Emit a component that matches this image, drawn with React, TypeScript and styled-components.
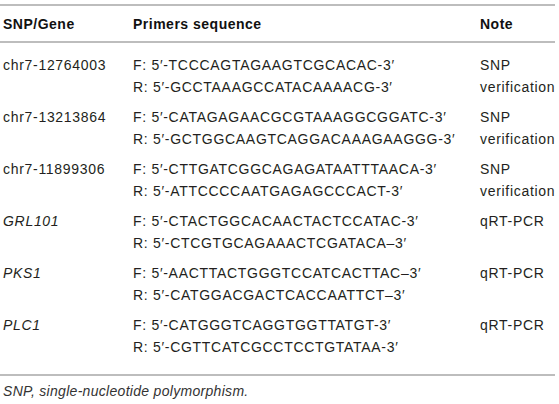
import React from "react";
import styled, { createGlobalStyle } from "styled-components";

const GlobalStyle = createGlobalStyle`
  html, body {
    margin: 0;
    padding: 0;
    background: #ffffff;
  }
  body {
    font-family: "Liberation Sans", Arial, Helvetica, sans-serif;
    color: #231f20;
  }
`;

const Page = styled.div`
  width: 559px;
  height: 404px;
  padding-top: 4px;
  box-sizing: border-box;
  overflow: hidden;
`;

const Table = styled.table`
  width: 555px;
  border-collapse: collapse;
  table-layout: fixed;
  font-size: 14px;
  letter-spacing: 0.7px;
`;

const HeadRow = styled.tr`
  border-top: 2px solid #bdbdbd;
  border-bottom: 2px solid #bdbdbd;
`;

const HeadCell = styled.th<{ $w: number; $first?: boolean }>`
  width: ${(p) => p.$w}px;
  height: 37px;
  padding: 0 0 0 ${(p) => (p.$first ? 3 : 0)}px;
  text-align: left;
  vertical-align: middle;
  font-weight: bold;
  letter-spacing: 0.5px;
  color: #111111;
  box-sizing: border-box;
`;

const Spacer = styled.tr`
  height: 8px;
`;

const GeneRow = styled.tr``;

const Cell = styled.td<{ $first?: boolean; $italic?: boolean }>`
  padding: 4px 0 4px ${(p) => (p.$first ? 3 : 0)}px;
  vertical-align: top;
  line-height: 22px;
  font-style: ${(p) => (p.$italic ? "italic" : "normal")};
`;

const Line = styled.div`
  white-space: nowrap;
`;

const EndRow = styled.tr`
  height: 13px;
  border-bottom: 2px solid #bdbdbd;
`;

const Footnote = styled.p`
  margin: 0;
  padding: 6px 0 0 3px;
  font-size: 14px;
  line-height: 18px;
  font-style: italic;
  letter-spacing: 0.3px;
  color: #333333;
`;

type Gene = {
  name: string;
  italic?: boolean;
  f: string;
  r: string;
  note: string;
};

const genes: Gene[] = [
  {
    name: "chr7-12764003",
    f: "F: 5′-TCCCAGTAGAAGTCGCACAC-3′",
    r: "R: 5′-GCCTAAAGCCATACAAAACG-3′",
    note: "SNP verification",
  },
  {
    name: "chr7-13213864",
    f: "F: 5′-CATAGAGAACGCGTAAAGGCGGATC-3′",
    r: "R: 5′-GCTGGCAAGTCAGGACAAAGAAGGG-3′",
    note: "SNP verification",
  },
  {
    name: "chr7-11899306",
    f: "F: 5′-CTTGATCGGCAGAGATAATTTAACA-3′",
    r: "R: 5′-ATTCCCCAATGAGAGCCCACT-3′",
    note: "SNP verification",
  },
  {
    name: "GRL101",
    italic: true,
    f: "F: 5′-CTACTGGCACAACTACTCCATAC-3′",
    r: "R: 5′-CTCGTGCAGAAACTCGATACA–3′",
    note: "qRT-PCR",
  },
  {
    name: "PKS1",
    italic: true,
    f: "F: 5′-AACTTACTGGGTCCATCACTTAC–3′",
    r: "R: 5′-CATGGACGACTCACCAATTCT–3′",
    note: "qRT-PCR",
  },
  {
    name: "PLC1",
    italic: true,
    f: "F: 5′-CATGGGTCAGGTGGTTATGT-3′",
    r: "R: 5′-CGTTCATCGCCTCCTGTATAA-3′",
    note: "qRT-PCR",
  },
];

export default function App() {
  return (
    <Page>
      <GlobalStyle />
      <Table>
        <thead>
          <HeadRow>
            <HeadCell $w={133} $first>
              SNP/Gene
            </HeadCell>
            <HeadCell $w={347}>Primers sequence</HeadCell>
            <HeadCell $w={75}>Note</HeadCell>
          </HeadRow>
        </thead>
        <tbody>
          <Spacer>
            <td colSpan={3} />
          </Spacer>
          {genes.map((g) => (
            <GeneRow key={g.name}>
              <Cell $first $italic={g.italic}>
                {g.name}
              </Cell>
              <Cell>
                <Line>{g.f}</Line>
                <Line>{g.r}</Line>
              </Cell>
              <Cell>{g.note}</Cell>
            </GeneRow>
          ))}
          <EndRow>
            <td colSpan={3} />
          </EndRow>
        </tbody>
      </Table>
      <Footnote>SNP, single-nucleotide polymorphism.</Footnote>
    </Page>
  );
}
